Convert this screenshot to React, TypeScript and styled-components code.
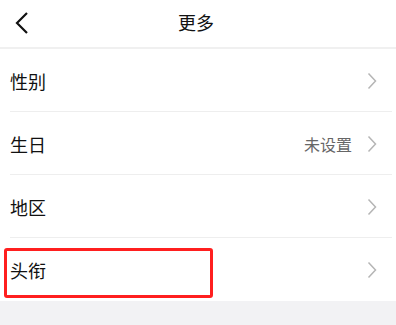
import React from "react";
import styled, { createGlobalStyle } from "styled-components";

const Global = createGlobalStyle`
  html, body { margin: 0; padding: 0; background: #f2f2f4; }
  body { font-family: "Noto Sans CJK SC", "Noto Sans", sans-serif; }
`;

const Page = styled.div`
  width: 396px;
  height: 325px;
  background: #f2f2f4;
  overflow: hidden;
`;

const Header = styled.div`
  height: 47px;
  background: #fff;
  border-bottom: 2px solid #f0f0f0;
  display: grid;
  grid-template-columns: 60px 1fr 60px;
  align-items: center;
`;

const BackButton = styled.div`
  display: flex;
  align-items: center;
  padding-left: 14px;
  padding-bottom: 2px;
`;

const Title = styled.div`
  text-align: center;
  font-size: 18px;
  color: #111;
  padding-bottom: 4px;
  padding-right: 4px;
`;

const List = styled.div`
  background: #fff;
`;

const Row = styled.div<{ $last?: boolean }>`
  position: relative;
  height: 63px;
  display: flex;
  align-items: center;
  padding: 0 19px 0 10px;
  &::after {
    content: "";
    display: ${(p) => (p.$last ? "none" : "block")};
    position: absolute;
    left: 10px;
    right: 4px;
    bottom: 0;
    height: 1px;
    background: #eeeeee;
  }
`;

const Label = styled.div`
  flex: 1;
  font-size: 18px;
  color: #111;
`;

const Value = styled.div`
  font-size: 16px;
  color: #666;
  margin-right: 15px;
`;

const Highlight = styled.div`
  position: absolute;
  left: 4px;
  top: 10px;
  width: 203px;
  height: 44px;
  border: 3px solid #ff1f1f;
  border-radius: 3px;
  pointer-events: none;
`;

const Chevron = () => (
  <svg width="10" height="18" viewBox="0 0 10 18">
    <path d="M1.5 1.5 L8.5 9 L1.5 16.5" fill="none" stroke="#b5b5b5" strokeWidth="1.5" />
  </svg>
);

const BackIcon = () => (
  <svg width="16" height="24" viewBox="0 0 16 24">
    <path d="M13 2 L3 12 L13 22" fill="none" stroke="#111" strokeWidth="2.2" />
  </svg>
);

const items = [
  { label: "性别" },
  { label: "生日", value: "未设置" },
  { label: "地区" },
  { label: "头衔", highlight: true },
];

export default function App() {
  return (
    <>
      <Global />
      <Page>
        <Header>
          <BackButton>
            <BackIcon />
          </BackButton>
          <Title>更多</Title>
          <div />
        </Header>
        <List>
          {items.map((it, i) => (
            <Row key={it.label} $last={i === items.length - 1}>
              <Label>{it.label}</Label>
              {it.value && <Value>{it.value}</Value>}
              <Chevron />
              {it.highlight && <Highlight />}
            </Row>
          ))}
        </List>
      </Page>
    </>
  );
}
